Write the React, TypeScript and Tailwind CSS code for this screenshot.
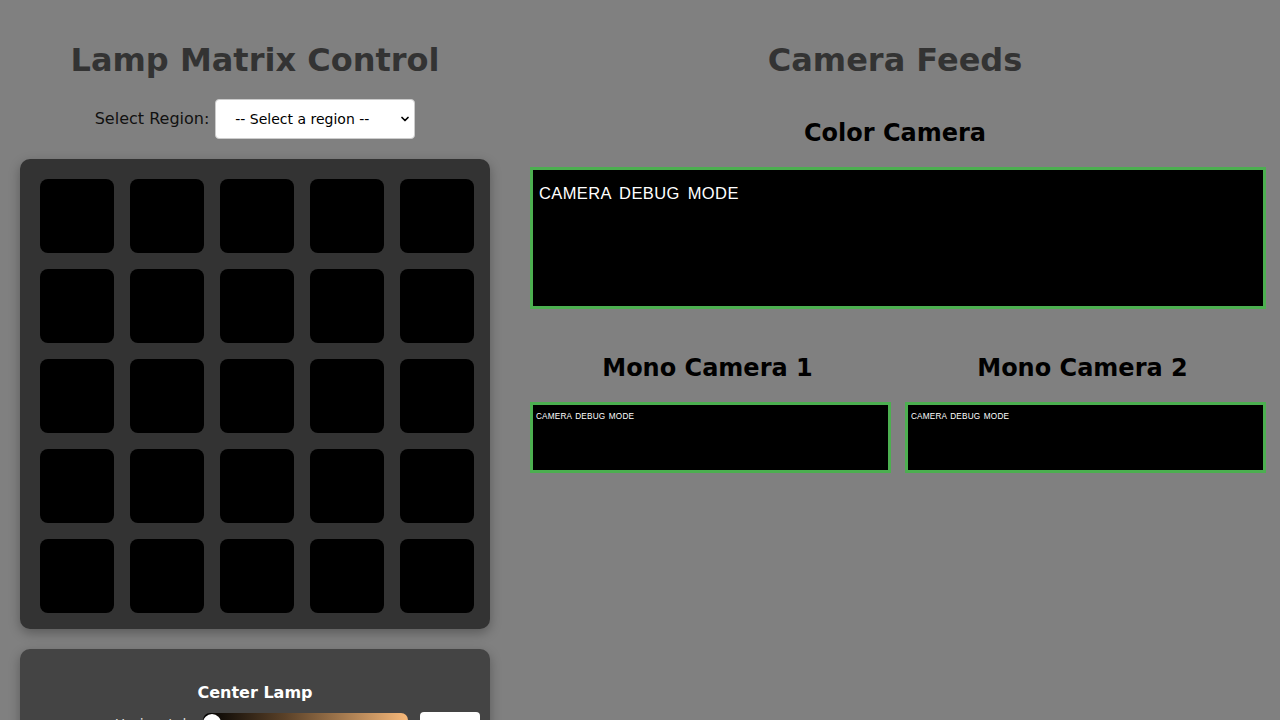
import { ChevronDown } from "lucide-react";

const lamps = Array.from({ length: 25 }, (_, i) => i);

const CameraBox = ({ big }: { big?: boolean }) => (
  <div
    className={
      big
        ? "h-[142px] w-[736px] shrink-0 border-[3px] border-[#4caf50] bg-black pl-[6px] pt-[14px]"
        : "h-[71px] w-[361px] shrink-0 border-[3px] border-[#4caf50] bg-black pl-[3px] pt-[7px]"
    }
  >
    <div
      className={
        big
          ? "font-['Liberation_Sans',sans-serif] text-[16.5px] leading-[18px] tracking-[0.4px] [word-spacing:3px] text-white"
          : "font-['Liberation_Sans',sans-serif] text-[8.2px] leading-[9px] tracking-[0.2px] [word-spacing:1px] text-white"
      }
    >
      CAMERA DEBUG MODE
    </div>
  </div>
);

const App = () => {
  return (
    <div className="h-[720px] overflow-hidden bg-[#808080] p-5 font-['DejaVu_Sans',sans-serif]">
      <div className="flex gap-10">
        {/* lamp side */}
        <div className="flex w-[470px] shrink-0 flex-col">
          <h1 className="mb-[20px] mt-[22px] text-center text-[32px] font-bold leading-[37px] text-[#333]">
            Lamp Matrix Control
          </h1>
          <div className="flex items-center justify-center gap-[6px]">
            <label className="text-[16px] text-[#111]">Select Region:</label>
            <div className="relative h-[40px] w-[200px]">
              <select className="h-full w-full appearance-none rounded-[4px] border border-[#ccc] bg-white pl-[19px] text-[14px] text-black">
                <option>-- Select a region --</option>
              </select>
              <ChevronDown
                className="pointer-events-none absolute right-[4px] top-[14px] h-[12px] w-[12px] text-black"
                strokeWidth={3.5}
              />
            </div>
          </div>

          <div className="mt-5 rounded-[10px] bg-[#333] pb-4 pl-5 pr-4 pt-5 shadow-[0_4px_12px_rgba(0,0,0,0.3)]">
            <div className="grid grid-cols-[repeat(5,74px)] gap-4">
              {lamps.map((i) => (
                <div key={i} className="h-[74px] w-[74px] rounded-[8px] bg-black" />
              ))}
            </div>
          </div>

          <div className="mt-5 h-[120px] shrink-0 rounded-[10px] bg-[#444] pl-5 pt-[34px] shadow-[0_4px_12px_rgba(0,0,0,0.3)]">
            <h3 className="pr-5 text-center text-[16px] font-bold leading-[19px] text-white">
              Center Lamp
            </h3>
            <div className="mt-[10px] flex items-start">
              <span className="w-[163px] shrink-0 pr-3 pt-[2px] text-right text-[14px] text-[#ddd]">
                Horizontal:
              </span>
              <div className="relative mt-[1px] h-[14px] w-[205px] shrink-0 rounded-full bg-[linear-gradient(90deg,#000_0%,#5a4128_40%,#f7b97a_100%)]">
                <div className="absolute left-0 top-[1px] h-[18px] w-[18px] rounded-full bg-white" />
              </div>
              <div className="ml-[12px] h-[30px] w-[60px] shrink-0 rounded-[4px] bg-white" />
            </div>
          </div>
        </div>

        {/* camera side */}
        <div className="flex w-[730px] shrink-0 flex-col">
          <h1 className="mt-[22px] text-center text-[32px] font-bold leading-[37px] text-[#333]">
            Camera Feeds
          </h1>
          <h2 className="mb-[20px] mt-[40px] text-center text-[24px] font-bold leading-[28px] text-black">
            Color Camera
          </h2>
          <CameraBox big />

          <div className="mt-[45px] flex gap-5">
            <div className="flex w-[355px] flex-col">
              <h2 className="mb-[20px] text-center text-[24px] font-bold leading-[28px] text-black">
                Mono Camera 1
              </h2>
              <CameraBox />
            </div>
            <div className="flex w-[355px] flex-col">
              <h2 className="mb-[20px] text-center text-[24px] font-bold leading-[28px] text-black">
                Mono Camera 2
              </h2>
              <CameraBox />
            </div>
          </div>
        </div>
      </div>
    </div>
  );
};

export default App;
